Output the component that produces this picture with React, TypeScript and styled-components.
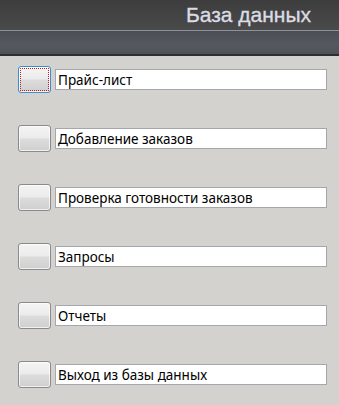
import React from 'react';
import styled, { createGlobalStyle } from 'styled-components';

const GlobalStyle = createGlobalStyle`
  html, body {
    margin: 0;
    padding: 0;
    background: #d4d2cf;
  }
`;

const Page = styled.div`
  width: 339px;
  height: 405px;
  background: #d4d2cf;
  overflow: hidden;
  font-family: "Noto Sans", "Open Sans", sans-serif;
`;

const Header = styled.header`
  display: flex;
  flex-direction: column;
`;

const TitleBar = styled.div`
  height: 30px;
  background: linear-gradient(to bottom, #3d3d3d, #4a4a4a);
  display: flex;
  justify-content: flex-end;
  align-items: flex-end;
  padding-right: 28px;
  box-sizing: border-box;
  padding-bottom: 1px;
`;

const Title = styled.h1`
  margin: 0;
  font-family: "Liberation Sans", "DejaVu Sans", sans-serif;
  font-size: 21px;
  line-height: 28px;
  font-weight: normal;
  color: #dcdce4;
  -webkit-text-stroke: 0.35px #dcdce4;
`;

const SubBar = styled.div`
  height: 23px;
  border-top: 1px solid #8b929b;
  border-bottom: 2px solid #2c2e31;
  background: linear-gradient(to bottom, #4b4f55, #55595f 60%, #4f5358);
`;

const Menu = styled.div`
  display: flex;
  flex-direction: column;
  gap: 32px;
  padding: 10px 0 0 18px;
`;

const Row = styled.div`
  display: flex;
  align-items: center;
  gap: 4px;
  height: 27px;
`;

const SquareButton = styled.button<{ $focused?: boolean }>`
  width: 33px;
  height: 27px;
  padding: 0;
  border-radius: 3px;
  border: 1px solid ${p => (p.$focused ? '#3a8fd0' : '#8a8a8a')};
  background: linear-gradient(to bottom, #f4f4f4 0%, #ebebeb 48%, #dcdcdc 52%, #cfcfcf 100%);
  outline: ${p => (p.$focused ? '1px dotted #c02020' : 'none')};
  outline-offset: -3px;
  box-shadow: inset 0 0 0 1px rgba(255, 255, 255, 0.7);
`;

const Field = styled.div`
  box-sizing: border-box;
  width: 272px;
  height: 21px;
  background: #ffffff;
  border: 1px solid #a4a7ab;
  display: flex;
  align-items: center;
  padding-left: 2px;
  font-size: 13.5px;
  color: #000;
`;

const items = [
  'Прайс-лист',
  'Добавление заказов',
  'Проверка готовности заказов',
  'Запросы',
  'Отчеты',
  'Выход из базы данных',
];

const App: React.FC = () => {
  return (
    <Page>
      <GlobalStyle />
      <Header>
        <TitleBar>
          <Title>База данных</Title>
        </TitleBar>
        <SubBar />
      </Header>
      <Menu>
        {items.map((label, i) => (
          <Row key={label}>
            <SquareButton $focused={i === 0} />
            <Field>{label}</Field>
          </Row>
        ))}
      </Menu>
    </Page>
  );
};

export default App;
